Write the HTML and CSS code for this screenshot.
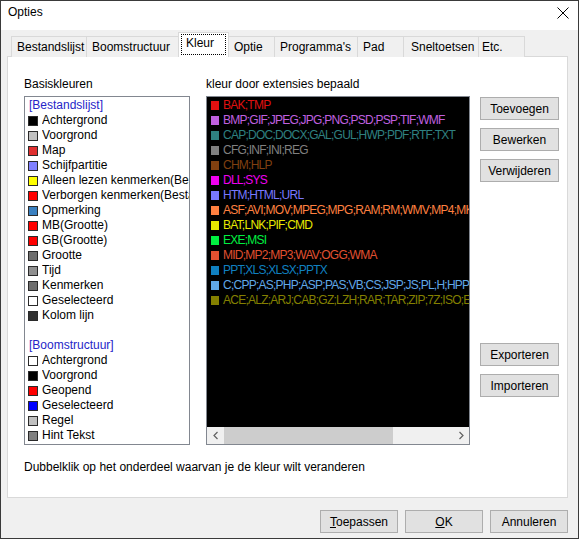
FILE: index.html
```html
<!DOCTYPE html>
<html>
<head>
<meta charset="utf-8">
<title>Opties</title>
<link rel="stylesheet" href="styles.css">
</head>
<body>
<div class="window">
  <div class="titlebar">
    <span class="title">Opties</span>
    <svg class="close" width="12" height="12" viewBox="0 0 12 12"><path d="M0.5 0.5 L11.5 11.5 M11.5 0.5 L0.5 11.5" stroke="#000" stroke-width="1" fill="none"/></svg>
  </div>
  <div class="body">
    <div class="tabs">
      <div class="tab t1">Bestandslijst</div>
      <div class="tab t2">Boomstructuur</div>
      <div class="tab t3 active"><span class="focus"></span>Kleur</div>
      <div class="tab t4">Optie</div>
      <div class="tab t5">Programma's</div>
      <div class="tab t6">Pad</div>
      <div class="tab t7">Sneltoetsen</div>
      <div class="tab t8">Etc.</div>
    </div>
    <div class="panel">
      <div class="columns">
        <div class="col col-basic">
          <div class="label">Basiskleuren</div>
          <div class="listbox basic">
            <div class="row head"><span class="txt">[Bestandslijst]</span></div>
            <div class="row"><span class="sw c-black"></span><span class="txt">Achtergrond</span></div>
            <div class="row"><span class="sw c-silver"></span><span class="txt">Voorgrond</span></div>
            <div class="row"><span class="sw c-map"></span><span class="txt">Map</span></div>
            <div class="row"><span class="sw c-lav"></span><span class="txt">Schijfpartitie</span></div>
            <div class="row"><span class="sw c-yellow"></span><span class="txt">Alleen lezen kenmerken(Bestandslijst)</span></div>
            <div class="row"><span class="sw c-red"></span><span class="txt">Verborgen kenmerken(Bestandslijst)</span></div>
            <div class="row"><span class="sw c-steel"></span><span class="txt">Opmerking</span></div>
            <div class="row"><span class="sw c-red"></span><span class="txt">MB(Grootte)</span></div>
            <div class="row"><span class="sw c-red"></span><span class="txt">GB(Grootte)</span></div>
            <div class="row"><span class="sw c-g70"></span><span class="txt">Grootte</span></div>
            <div class="row"><span class="sw c-g90"></span><span class="txt">Tijd</span></div>
            <div class="row"><span class="sw c-g70"></span><span class="txt">Kenmerken</span></div>
            <div class="row"><span class="sw c-white"></span><span class="txt">Geselecteerd</span></div>
            <div class="row"><span class="sw c-g30"></span><span class="txt">Kolom lijn</span></div>
            <div class="row"></div>
            <div class="row head"><span class="txt">[Boomstructuur]</span></div>
            <div class="row"><span class="sw c-white"></span><span class="txt">Achtergrond</span></div>
            <div class="row"><span class="sw c-black"></span><span class="txt">Voorgrond</span></div>
            <div class="row"><span class="sw c-red"></span><span class="txt">Geopend</span></div>
            <div class="row"><span class="sw c-blue"></span><span class="txt">Geselecteerd</span></div>
            <div class="row"><span class="sw c-silver"></span><span class="txt">Regel</span></div>
            <div class="row"><span class="sw c-g80"></span><span class="txt">Hint Tekst</span></div>
          </div>
        </div>
        <div class="col col-ext">
          <div class="label">kleur door extensies bepaald</div>
          <div class="listbox ext">
            <div class="ext-items">
              <div class="row e1"><span class="esw"></span><span class="txt">BAK;TMP</span></div>
              <div class="row e2"><span class="esw"></span><span class="txt">BMP;GIF;JPEG;JPG;PNG;PSD;PSP;TIF;WMF</span></div>
              <div class="row e3"><span class="esw"></span><span class="txt">CAP;DOC;DOCX;GAL;GUL;HWP;PDF;RTF;TXT</span></div>
              <div class="row e4"><span class="esw"></span><span class="txt">CFG;INF;INI;REG</span></div>
              <div class="row e5"><span class="esw"></span><span class="txt">CHM;HLP</span></div>
              <div class="row e6"><span class="esw"></span><span class="txt">DLL;SYS</span></div>
              <div class="row e7"><span class="esw"></span><span class="txt">HTM;HTML;URL</span></div>
              <div class="row e8"><span class="esw"></span><span class="txt">ASF;AVI;MOV;MPEG;MPG;RAM;RM;WMV;MP4;MKV;FLV</span></div>
              <div class="row e9"><span class="esw"></span><span class="txt">BAT;LNK;PIF;CMD</span></div>
              <div class="row e10"><span class="esw"></span><span class="txt">EXE;MSI</span></div>
              <div class="row e11"><span class="esw"></span><span class="txt">MID;MP2;MP3;WAV;OGG;WMA</span></div>
              <div class="row e12"><span class="esw"></span><span class="txt">PPT;XLS;XLSX;PPTX</span></div>
              <div class="row e13"><span class="esw"></span><span class="txt">C;CPP;AS;PHP;ASP;PAS;VB;CS;JSP;JS;PL;H;HPP;PY</span></div>
              <div class="row e14"><span class="esw"></span><span class="txt">ACE;ALZ;ARJ;CAB;GZ;LZH;RAR;TAR;ZIP;7Z;ISO;EGG</span></div>
            </div>
            <div class="hscroll">
              <div class="arrow">
                <svg width="6" height="9" viewBox="0 0 6 9"><path d="M4.5 1 L1 4.5 L4.5 8" stroke="#606060" stroke-width="1.2" fill="none"/></svg>
              </div>
              <div class="track"><div class="thumb"></div></div>
              <div class="arrow">
                <svg width="6" height="9" viewBox="0 0 6 9"><path d="M1.5 1 L5 4.5 L1.5 8" stroke="#606060" stroke-width="1.2" fill="none"/></svg>
              </div>
            </div>
          </div>
        </div>
        <div class="col col-buttons">
          <button class="btn">Toevoegen</button>
          <button class="btn">Bewerken</button>
          <button class="btn">Verwijderen</button>
          <div class="btn-group-lower">
            <button class="btn">Exporteren</button>
            <button class="btn">Importeren</button>
          </div>
        </div>
      </div>
      <div class="hint">Dubbelklik op het onderdeel waarvan je de kleur wilt veranderen</div>
    </div>
    <div class="footer">
      <button class="btn fbtn"><u>T</u>oepassen</button>
      <button class="btn fbtn"><u>O</u>K</button>
      <button class="btn fbtn">Annuleren</button>
    </div>
  </div>
</div>
</body>
</html>
```

FILE: styles.css
```css
* { box-sizing: border-box; }
html, body { margin: 0; padding: 0; }
body {
  font-family: "Liberation Sans", Arial, sans-serif;
  font-size: 12px;
  color: #000;
  background: #f0f0f0;
}
.window {
  width: 579px;
  height: 539px;
  border: 1px solid #3a3a3a;
  background: #f0f0f0;
  display: flex;
  flex-direction: column;
}
.titlebar {
  height: 29px;
  background: #fff;
  display: flex;
  align-items: flex-start;
  justify-content: space-between;
  padding: 4px 9px 0 7px;
  flex: none;
}
.title { font-size: 12px; line-height: 15px; }
.close { display: block; margin-top: 2px; }
.body {
  flex: 1;
  display: flex;
  flex-direction: column;
}
.tabs {
  display: flex;
  align-items: flex-end;
  padding: 2px 0 0 10px;
  height: 27px;
  margin-bottom: -1px;
  position: relative;
  z-index: 1;
}
.tab {
  height: 21px;
  border: 1px solid #d9d9d9;
  border-bottom: none;
  margin-right: -1px;
  padding-left: 5px;
  line-height: 20px;
  background: #f0f0f0;
  white-space: nowrap;
  position: relative;
}
.t1 { width: 76px; }
.t2 { width: 93px; }
.t3 { width: 51px; }
.t4 { width: 47px; }
.t5 { width: 84px; }
.t6 { width: 47px; }
.t7 { width: 76px; padding-left: 7px; }
.t8 { width: 47px; padding-left: 3px; }
.tab.active {
  height: 25px;
  background: #fff;
  z-index: 2;
  padding-left: 7px;
  padding-top: 3px;
  line-height: 15px;
}
.focus {
  position: absolute;
  left: 2px;
  right: 2px;
  top: 1px;
  bottom: 2px;
  border: 1px dotted #000;
}
.panel {
  margin: 0 10px 0 6px;
  height: 442px;
  background: #fff;
  border: 1px solid #d9d9d9;
  padding: 20px 7px 0 16px;
  flex: none;
}
.columns {
  display: flex;
  align-items: flex-start;
}
.label {
  height: 15px;
  line-height: 15px;
  margin-bottom: 4px;
  white-space: nowrap;
}
.col-basic { width: 166px; }
.col-ext { width: 264px; margin-left: 16px; }
.col-buttons {
  width: 79px;
  margin-left: 10px;
  padding-top: 20px;
  display: flex;
  flex-direction: column;
}
.listbox {
  height: 349px;
  border: 1px solid #828790;
  overflow: hidden;
}
.basic {
  background: #fff;
  padding: 1px 0 0 3px;
}
.row {
  height: 15px;
  line-height: 15px;
  white-space: nowrap;
  display: flex;
  align-items: center;
}
.txt {
  flex: 1;
  min-width: 0;
  overflow: hidden;
  white-space: nowrap;
}
.head { color: #2525c8; padding-left: 1px; }
.sw {
  width: 10px;
  height: 10px;
  border: 1px solid #2a2a2a;
  margin-right: 4px;
  flex: none;
}
.c-black { background: #000; }
.c-silver { background: #c0c0c0; }
.c-map { background: #e03030; }
.c-lav { background: #8080ff; }
.c-yellow { background: #ffff00; }
.c-red { background: #ff0000; }
.c-steel { background: #3a80c0; }
.c-g70 { background: #6e6e6e; }
.c-g90 { background: #909090; }
.c-g80 { background: #808080; }
.c-white { background: #fff; }
.c-g30 { background: #303030; }
.c-blue { background: #0000ff; }

.ext {
  background: #000;
  display: flex;
  flex-direction: column;
}
.ext-items {
  flex: 1;
  padding: 1px 0 0 4px;
  overflow: hidden;
  letter-spacing: -0.75px;
}
.esw {
  width: 8px;
  height: 9px;
  margin-right: 4px;
  flex: none;
  background: currentColor;
}
.e1 { color: #e01010; }
.e2 { color: #c060e0; }
.e3 { color: #2f8080; }
.e4 { color: #808080; }
.e5 { color: #804010; }
.e6 { color: #f000f0; }
.e7 { color: #7878ff; }
.e8 { color: #ff8040; }
.e9 { color: #e8e800; }
.e10 { color: #00f040; }
.e11 { color: #e05030; }
.e12 { color: #1080c0; }
.e13 { color: #60a8e8; }
.e14 { color: #848000; }
.hscroll {
  height: 17px;
  background: #f0f0f0;
  display: flex;
  flex: none;
}
.arrow {
  width: 17px;
  display: flex;
  align-items: center;
  justify-content: center;
}
.track { flex: 1; display: flex; }
.thumb {
  width: 169px;
  background: #cdcdcd;
}
.btn {
  font-family: "Liberation Sans", Arial, sans-serif;
  font-size: 12px;
  color: #000;
  height: 23px;
  width: 79px;
  padding: 0;
  background: #e1e1e1;
  border: 1px solid #adadad;
  margin: 0 0 8px 0;
  border-radius: 0;
}
.btn-group-lower {
  margin-top: 153px;
  display: flex;
  flex-direction: column;
}
.hint {
  margin-top: 15px;
  line-height: 15px;
}
.footer {
  display: flex;
  justify-content: flex-end;
  padding: 12px 10px 0 0;
  gap: 7px;
}
.fbtn {
  width: 78px;
  margin: 0;
}
```
